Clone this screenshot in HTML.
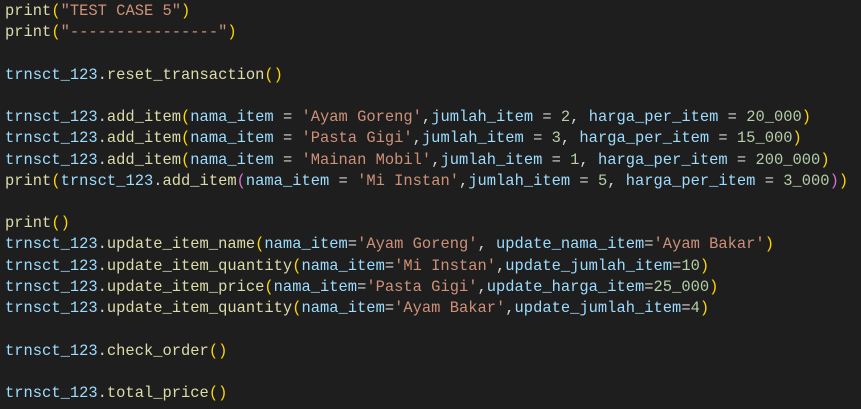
<!DOCTYPE html><html><head><style>
body{margin:0;background:#1e1e1e;width:861px;height:409px;overflow:hidden}
pre{margin:0;padding:1px 0 0 5px;font-family:"Liberation Mono",monospace;font-size:15.44px;line-height:21.22px;color:#d4d4d4}
.v{color:#9cdcfe}.f{color:#dcdcaa}.s{color:#ce9178}.n{color:#b5cea8}.g{color:#ffd700}.p{color:#da70d6}
</style></head><body><pre><span class="f">print</span><span class="g">(</span><span class="s">"TEST CASE 5"</span><span class="g">)</span>
<span class="f">print</span><span class="g">(</span><span class="s">"----------------"</span><span class="g">)</span>

<span class="v">trnsct_123</span>.<span class="f">reset_transaction</span><span class="g">()</span>

<span class="v">trnsct_123</span>.<span class="f">add_item</span><span class="g">(</span><span class="v">nama_item</span> = <span class="s">'Ayam Goreng'</span>,<span class="v">jumlah_item</span> = <span class="n">2</span>, <span class="v">harga_per_item</span> = <span class="n">20_000</span><span class="g">)</span>
<span class="v">trnsct_123</span>.<span class="f">add_item</span><span class="g">(</span><span class="v">nama_item</span> = <span class="s">'Pasta Gigi'</span>,<span class="v">jumlah_item</span> = <span class="n">3</span>, <span class="v">harga_per_item</span> = <span class="n">15_000</span><span class="g">)</span>
<span class="v">trnsct_123</span>.<span class="f">add_item</span><span class="g">(</span><span class="v">nama_item</span> = <span class="s">'Mainan Mobil'</span>,<span class="v">jumlah_item</span> = <span class="n">1</span>, <span class="v">harga_per_item</span> = <span class="n">200_000</span><span class="g">)</span>
<span class="f">print</span><span class="g">(</span><span class="v">trnsct_123</span>.<span class="f">add_item</span><span class="p">(</span><span class="v">nama_item</span> = <span class="s">'Mi Instan'</span>,<span class="v">jumlah_item</span> = <span class="n">5</span>, <span class="v">harga_per_item</span> = <span class="n">3_000</span><span class="p">)</span><span class="g">)</span>

<span class="f">print</span><span class="g">()</span>
<span class="v">trnsct_123</span>.<span class="f">update_item_name</span><span class="g">(</span><span class="v">nama_item</span>=<span class="s">'Ayam Goreng'</span>, <span class="v">update_nama_item</span>=<span class="s">'Ayam Bakar'</span><span class="g">)</span>
<span class="v">trnsct_123</span>.<span class="f">update_item_quantity</span><span class="g">(</span><span class="v">nama_item</span>=<span class="s">'Mi Instan'</span>,<span class="v">update_jumlah_item</span>=<span class="n">10</span><span class="g">)</span>
<span class="v">trnsct_123</span>.<span class="f">update_item_price</span><span class="g">(</span><span class="v">nama_item</span>=<span class="s">'Pasta Gigi'</span>,<span class="v">update_harga_item</span>=<span class="n">25_000</span><span class="g">)</span>
<span class="v">trnsct_123</span>.<span class="f">update_item_quantity</span><span class="g">(</span><span class="v">nama_item</span>=<span class="s">'Ayam Bakar'</span>,<span class="v">update_jumlah_item</span>=<span class="n">4</span><span class="g">)</span>

<span class="v">trnsct_123</span>.<span class="f">check_order</span><span class="g">()</span>

<span class="v">trnsct_123</span>.<span class="f">total_price</span><span class="g">()</span></pre></body></html>
